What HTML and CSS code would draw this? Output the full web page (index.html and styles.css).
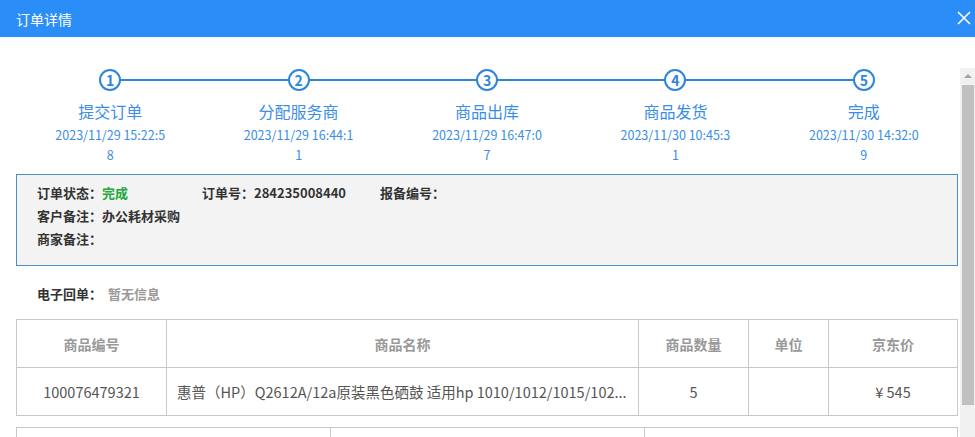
FILE: index.html
```html
<!DOCTYPE html>
<html lang="zh-CN">
<head>
  <meta charset="UTF-8">
  <meta name="viewport" content="width=device-width, initial-scale=1.0">
  <title>订单详情</title>
  <link rel="stylesheet" href="styles.css">
</head>
<body>
  <div class="dialog">
    <div class="dialog-head">
      <span class="dialog-title">订单详情</span>
      <span class="dialog-close">
        <svg width="14" height="14" viewBox="0 0 14 14"><path d="M1 1L13 13M13 1L1 13" stroke="#fff" stroke-width="1.6" fill="none"/></svg>
      </span>
    </div>
    <div class="dialog-body">
      <div class="content">
        <!-- 进度条 -->
        <ul class="steps">
          <li class="step">
            <span class="step-num">1</span>
            <p class="step-name">提交订单</p>
            <p class="step-time">2023/11/29 15:22:58</p>
          </li>
          <li class="step">
            <span class="step-num">2</span>
            <p class="step-name">分配服务商</p>
            <p class="step-time">2023/11/29 16:44:11</p>
          </li>
          <li class="step">
            <span class="step-num">3</span>
            <p class="step-name">商品出库</p>
            <p class="step-time">2023/11/29 16:47:07</p>
          </li>
          <li class="step">
            <span class="step-num">4</span>
            <p class="step-name">商品发货</p>
            <p class="step-time">2023/11/30 10:45:31</p>
          </li>
          <li class="step">
            <span class="step-num">5</span>
            <p class="step-name">完成</p>
            <p class="step-time">2023/11/30 14:32:09</p>
          </li>
        </ul>

        <!-- 订单信息 -->
        <div class="info">
          <div class="info-row">
            <span class="info-item w1">订单状态：<em class="green">完成</em></span>
            <span class="info-item w2">订单号：284235008440</span>
            <span class="info-item">报备编号：</span>
          </div>
          <div class="info-row">
            <span class="info-item">客户备注：办公耗材采购</span>
          </div>
          <div class="info-row">
            <span class="info-item">商家备注：</span>
          </div>
        </div>

        <div class="receipt">
          <span class="receipt-label">电子回单：</span>
          <span class="receipt-val">暂无信息</span>
        </div>

        <table class="goods">
          <colgroup>
            <col style="width:150px">
            <col style="width:472px">
            <col style="width:110px">
            <col style="width:80px">
            <col>
          </colgroup>
          <thead>
            <tr>
              <th>商品编号</th>
              <th>商品名称</th>
              <th>商品数量</th>
              <th>单位</th>
              <th>京东价</th>
            </tr>
          </thead>
          <tbody>
            <tr>
              <td>100076479321</td>
              <td class="name">惠普（HP）Q2612A/12a原装黑色硒鼓 适用hp 1010/1012/1015/102...</td>
              <td>5</td>
              <td></td>
              <td>¥ 545</td>
            </tr>
          </tbody>
        </table>

        <table class="sum">
          <colgroup>
            <col style="width:314px">
            <col style="width:314px">
            <col>
          </colgroup>
          <tr>
            <td></td>
            <td></td>
            <td></td>
          </tr>
        </table>
      </div>

      <!-- 滚动条 -->
      <div class="scrollbar">
        <div class="scroll-up"></div>
        <div class="scroll-thumb"></div>
      </div>
    </div>
  </div>
</body>
</html>
```

FILE: styles.css
```css
/* reset */
*{
  margin: 0;
  padding: 0;
  box-sizing: border-box;
}
html,body{
  width: 975px;
  height: 437px;
  overflow: hidden;
  background-color: #fff;
}
body{
  font-family: "Noto Sans CJK SC", "Liberation Sans", sans-serif;
  color: #333;
}
li{
  list-style: none;
}
em{
  font-style: normal;
}

/* 标题栏 */
.dialog-head{
  height: 37px;
  background-color: #2b8df7;
  display: flex;
  align-items: center;
  justify-content: space-between;
  padding: 0 3px 0 16px;
}
.dialog-title{
  color: #fff;
  font-size: 14px;
  line-height: 20px;
}
.dialog-close{
  display: flex;
  width: 16px;
  height: 16px;
  align-items: center;
  justify-content: center;
  margin-top: -2px;
}

.dialog-body{
  display: flex;
  height: 400px;
  overflow: hidden; /*超出部分隐藏*/
}
.content{
  width: 960px;
  padding: 32px 2px 0 16px;
}

/* 进度条 */
.steps{
  display: flex;
}
.step{
  flex: 1;
  display: flex;
  flex-direction: column;
  align-items: center;
  position: relative;
}
.step:not(:last-child)::before{
  content: "";
  position: absolute;
  top: 10px;
  left: 50%;
  width: 100%;
  height: 2px;
  background-color: #2e85dd;
}
.step-num{
  position: relative; /*盖住连线*/
  width: 22px;
  height: 22px;
  border: 2px solid #2e85dd;
  border-radius: 50%;
  background-color: #fff;
  color: #2e85dd;
  font-size: 14px;
  font-weight: bold;
  line-height: 18px;
  text-align: center;
}
.step-name{
  margin-top: 9px;
  font-size: 16px;
  line-height: 22px;
  color: #3a8ee6;
}
.step-time{
  width: 112px;
  margin-top: 3px;
  font-size: 12.5px;
  line-height: 20px;
  color: #3a8ee6;
  text-align: center;
  word-break: break-all;
}

/* 订单信息 */
.info{
  margin-top: 9px;
  height: 92px;
  border: 1px solid #4a8fd4;
  background-color: #f3f3f3;
  padding: 6px 20px 0;
}
.info-row{
  display: flex;
  font-size: 13px;
  line-height: 23px;
  font-weight: bold;
  color: #333;
}
.info-item.w1{
  width: 165px;
}
.info-item.w2{
  width: 178px;
}
.green{
  color: #21a73a;
}

.receipt{
  margin-top: 16px;
  padding-left: 21px;
  font-size: 13px;
  line-height: 23px;
}
.receipt-label{
  font-weight: bold;
}
.receipt-val{
  margin-left: 3px;
  color: #999;
  font-weight: bold;
}

/* 表格 */
table{
  width: 942px;
  border-collapse: collapse;
  table-layout: fixed;
}
.goods{
  margin-top: 14px;
}
.goods th,
.goods td{
  height: 48px;
  border: 1px solid #c8c8c8;
  text-align: center;
}
.goods th{
  color: #999;
  font-size: 14px;
  font-weight: bold;
}
.goods td{
  color: #555;
  font-size: 14.5px;
}
.goods td.name{
  text-align: left;
  padding: 0 10px;
  white-space: nowrap;
  overflow: hidden;
}
.sum{
  margin-top: 11px;
}
.sum td{
  height: 40px;
  border: 1px solid #c8c8c8;
}

/* 假滚动条 */
.scrollbar{
  width: 15px;
  margin-top: 31px;
  background-color: #f1f1f1;
}
.scroll-up{
  height: 17px;
  position: relative;
}
.scroll-up::after{
  content: "";
  position: absolute;
  left: 4px;
  top: 6px;
  border-left: 4px solid transparent;
  border-right: 4px solid transparent;
  border-bottom: 4px solid #a3a3a3;
}
.scroll-thumb{
  height: 320px;
  margin: 0 1px 0 2px;
  background-color: #c1c1c1;
}
```
